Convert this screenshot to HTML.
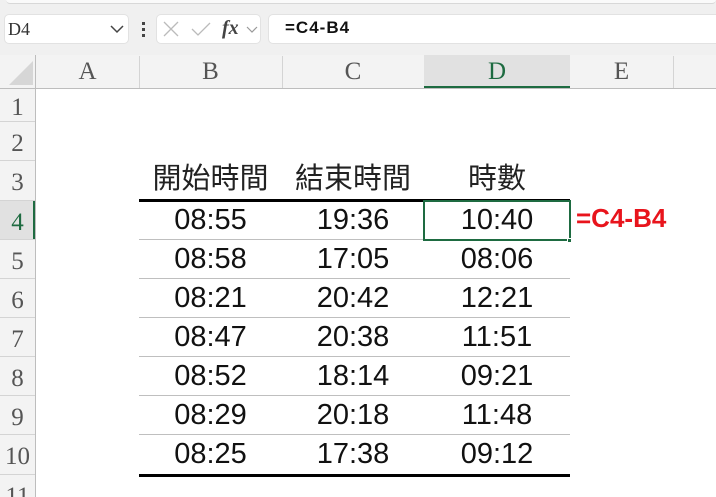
<!DOCTYPE html>
<html><head><meta charset="utf-8"><style>
*{margin:0;padding:0;box-sizing:border-box}
html,body{width:716px;height:497px;overflow:hidden}
body{background:#fff;position:relative;font-family:"Liberation Sans","Noto Sans CJK TC",sans-serif}
.a{position:absolute}
.hdr{font-family:"Liberation Serif",serif;color:#555;font-size:25px;text-align:center}
.cell{position:absolute;font-size:29px;color:#111;text-align:center;line-height:39px}
</style></head><body>
<div class="a" style="left:0;top:0;width:716px;height:55px;background:#f0f0f0"></div>
<div class="a" style="left:6px;top:0;width:710px;height:4px;background:#fafafa;border-bottom:1px solid #d8d8d8;border-radius:0 0 4px 4px"></div>
<div class="a" style="left:4px;top:14px;width:125px;height:30px;background:#fff;border:1px solid #e2e2e2;border-radius:5px"></div>
<div class="a" style="left:8px;top:19px;font-family:'Liberation Serif',serif;font-size:18px;color:#333">D4</div>
<svg class="a" style="left:110px;top:25px" width="14" height="9"><path d="M1 1L7 7L13 1" stroke="#444" stroke-width="1.5" fill="none"/></svg>
<div class="a" style="left:142px;top:22px;width:3px;height:3px;background:#444"></div>
<div class="a" style="left:142px;top:28px;width:3px;height:3px;background:#444"></div>
<div class="a" style="left:142px;top:34px;width:3px;height:3px;background:#444"></div>
<div class="a" style="left:156px;top:14px;width:105px;height:30px;background:#fff;border:1px solid #e2e2e2;border-radius:5px"></div>
<svg class="a" style="left:162px;top:21px" width="20" height="16"><path d="M2 1L16 15M16 1L2 15" stroke="#bbb" stroke-width="1.3" fill="none"/></svg>
<svg class="a" style="left:190px;top:21px" width="22" height="16"><path d="M2 8L8 14L20 2" stroke="#bbb" stroke-width="1.3" fill="none"/></svg>
<div class="a" style="left:222px;top:17px;font-family:'Liberation Serif',serif;font-style:italic;font-weight:bold;font-size:20px;color:#444">fx</div>
<svg class="a" style="left:246px;top:26px" width="12" height="8"><path d="M1 1L6 6L11 1" stroke="#999" stroke-width="1.2" fill="none"/></svg>
<div class="a" style="left:268px;top:14px;width:460px;height:30px;background:#fff;border:1px solid #e2e2e2;border-radius:5px"></div>
<div class="a" style="left:285px;top:18px;font-size:17px;font-weight:bold;color:#111;letter-spacing:1px">=C4-B4</div>
<div class="a" style="left:0;top:55px;width:716px;height:34px;background:#f3f3f3;border-bottom:1px solid #bdbdbd"></div>
<svg class="a" style="left:6px;top:60px" width="28" height="26"><path d="M27 1L27 25L3 25Z" fill="#d6d6d6"/></svg>
<div class="a" style="left:35px;top:55px;width:1px;height:442px;background:#bdbdbd"></div>
<div class="a" style="left:424px;top:55px;width:146px;height:33px;background:#e1e1e1;border-bottom:2px solid #1e6b41"></div>
<div class="a hdr" style="left:36px;top:58px;width:103px">A</div>
<div class="a hdr" style="left:139px;top:58px;width:143px">B</div>
<div class="a hdr" style="left:282px;top:58px;width:142px">C</div>
<div class="a hdr" style="left:424px;top:58px;width:146px;color:#1e6b41">D</div>
<div class="a hdr" style="left:570px;top:58px;width:103px">E</div>
<div class="a" style="left:139px;top:56px;width:1px;height:32px;background:#d4d4d4"></div>
<div class="a" style="left:282px;top:56px;width:1px;height:32px;background:#d4d4d4"></div>
<div class="a" style="left:673px;top:56px;width:1px;height:32px;background:#d4d4d4"></div>
<div class="a" style="left:0;top:89px;width:35px;height:408px;background:#f3f3f3"></div>
<div class="a" style="left:0;top:200px;width:35px;height:40px;background:#e1e1e1;border-right:2px solid #1e6b41"></div>
<div id="rh"></div>
<div class="a" style="left:139px;top:199px;width:431px;height:3px;background:#000"></div>
<div class="a" style="left:139px;top:474px;width:431px;height:3px;background:#000"></div>
<div id="tb"></div>
<div class="cell" style="left:139px;top:160px;width:143px;font-size:29px;color:#222">開始時間</div>
<div class="cell" style="left:282px;top:160px;width:142px;font-size:29px;color:#222">結束時間</div>
<div class="cell" style="left:424px;top:160px;width:146px;font-size:29px;color:#222">時數</div>
<div class="a" style="left:423px;top:200px;width:148px;height:41px;border:2px solid #1e6b41"></div>
<div class="a" style="left:567px;top:238px;width:5px;height:5px;background:#1e6b41;border:1px solid #fff"></div>
<div class="a" style="left:576px;top:203px;font-size:26px;font-weight:bold;color:#e8141c">=C4-B4</div>
<script>
var rows=[[88,121],[121,160],[160,200],[200,239],[239,278],[278,317],[317,356],[356,395],[395,434],[434,474],[474,514]];
var h='';
rows.forEach(function(r,i){h+='<div class="a hdr" style="left:0;top:'+(r[0]+((r[1]-r[0])-28)/2+3)+'px;width:35px;line-height:28px;font-size:25px;'+(i==3?'color:#1e6b41':'')+'">'+(i+1)+'</div>';
h+='<div class="a" style="left:0;top:'+r[1]+'px;width:35px;height:1px;background:#d4d4d4"></div>';});
document.getElementById('rh').outerHTML=h;
var d=[["08:55","19:36","10:40"],["08:58","17:05","08:06"],["08:21","20:42","12:21"],["08:47","20:38","11:51"],["08:52","18:14","09:21"],["08:29","20:18","11:48"],["08:25","17:38","09:12"]];
var t='',xs=[[139,143],[282,142],[424,146]];
d.forEach(function(r,i){var y=rows[i+3][0];
r.forEach(function(v,j){t+='<div class="cell" style="left:'+xs[j][0]+'px;top:'+(y+1)+'px;width:'+xs[j][1]+'px">'+v+'</div>';});
if(i<6)t+='<div class="a" style="left:139px;top:'+rows[i+3][1]+'px;width:431px;height:1px;background:#bfbfbf"></div>';});
document.getElementById('tb').outerHTML=t;
</script>
</body></html>
